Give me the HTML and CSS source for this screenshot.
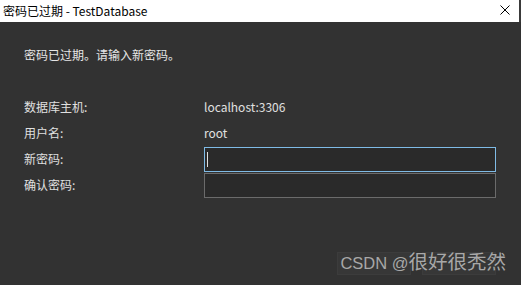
FILE: index.html
```html
<!DOCTYPE html>
<html lang="zh-CN">
<head>
    <meta charset="UTF-8">
    <title>密码已过期 - TestDatabase</title>
    <link rel="stylesheet" href="styles.css">
</head>
<body>
    <div class="window">
        <div class="titlebar">
            <span class="title">密码已过期 - TestDatabase</span>
            <svg class="close" width="10" height="10" viewBox="0 0 10 10">
                <path d="M0.5 0.5 L9.5 9.5 M9.5 0.5 L0.5 9.5" stroke="#000" stroke-width="1" fill="none"/>
            </svg>
        </div>

        <div class="content">
            <p class="message">密码已过期。请输入新密码。</p>

            <div class="form">
                <span class="label">数据库主机:</span>
                <span class="value">localhost:3306</span>

                <span class="label">用户名:</span>
                <span class="value">root</span>

                <span class="label">新密码:</span>
                <div class="input focused"><span class="caret"></span></div>

                <span class="label">确认密码:</span>
                <div class="input"></div>
            </div>

            <div class="buttons">
                <div class="button"></div>
                <div class="button"></div>
            </div>
        </div>

        <div class="watermark">CSDN @<span class="cjk">很好很秃然</span></div>
    </div>
</body>
</html>
```

FILE: styles.css
```css
* { margin: 0; padding: 0; box-sizing: border-box; }

body {
    font-family: "Noto Sans CJK SC", "Noto Sans", sans-serif;
    background: #323232;
    width: 521px;
    height: 285px;
    overflow: hidden;
}

.window {
    position: relative;
    height: 285px;
    display: flex;
    flex-direction: column;
    background: #323232;
}

.titlebar {
    height: 22px;
    background: #ffffff;
    border-right: 2px solid #3a3a3a;
    display: flex;
    align-items: center;
    justify-content: space-between;
    padding: 0 9px 0 3px;
}

.title {
    font-size: 12px;
    color: #000000;
    line-height: 16px;
}

.close {
    display: block;
    margin-top: -2px;
}

.content {
    flex: 1;
    display: flex;
    flex-direction: column;
    padding: 0 24px;
}

.message {
    margin-top: 25px;
    font-size: 12px;
    line-height: 16px;
    color: #e6e6e6;
}

.form {
    margin-top: 31px;
    display: grid;
    grid-template-columns: 180px 292px;
    grid-auto-rows: 26px;
    align-items: center;
}

.label,
.value {
    font-size: 12px;
    line-height: 16px;
    color: #e0e0e0;
}

.input {
    align-self: end;
    height: 25px;
    background: #2a2a2a;
    border: 1px solid #6b6b6b;
    display: flex;
    align-items: center;
    padding-left: 2px;
}

.input.focused {
    border-color: #7fbbe6;
}

.caret {
    width: 1px;
    height: 15px;
    background: #e0e0e0;
}

.buttons {
    margin-top: auto;
    margin-bottom: 10px;
    display: flex;
    justify-content: flex-end;
    gap: 11px;
    padding-right: 1px;
}

.button {
    width: 74px;
    height: 23px;
    background: #373737;
    border: 1px solid #3c3c3c;
}

.watermark {
    position: absolute;
    right: 15px;
    bottom: 12px;
    font-family: "Liberation Sans", "Noto Sans CJK SC", sans-serif;
    font-size: 16.5px;
    line-height: 20px;
    color: #a8a8a8;
    white-space: nowrap;
}

.watermark .cjk {
    font-family: "Noto Sans CJK SC", sans-serif;
    font-size: 19.5px;
}
```
